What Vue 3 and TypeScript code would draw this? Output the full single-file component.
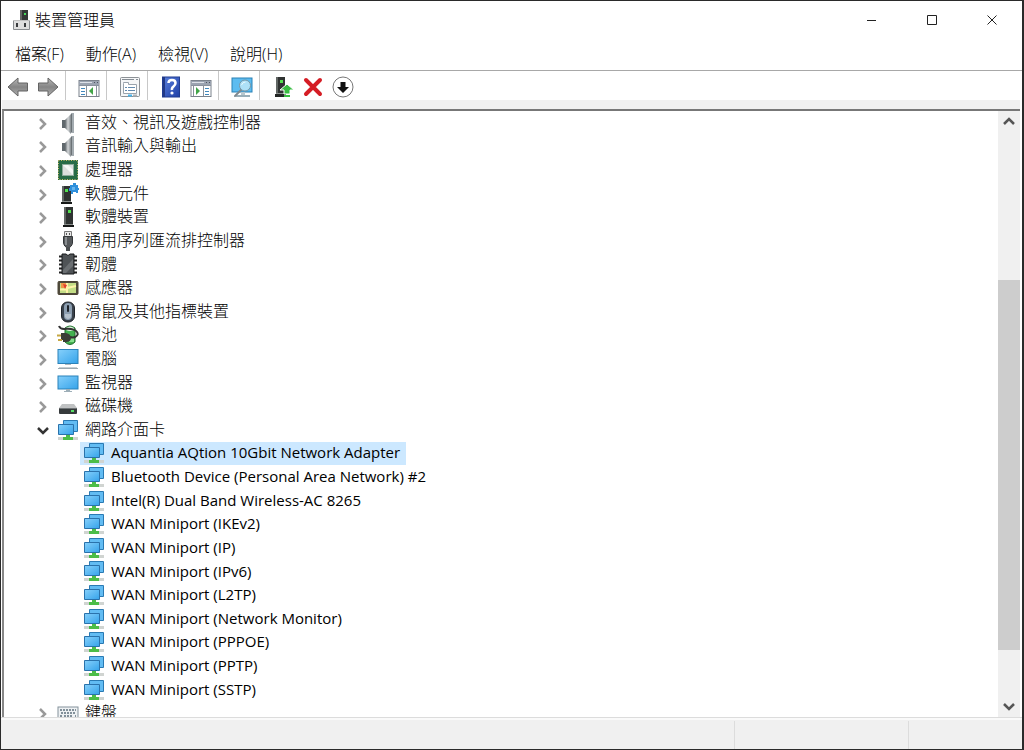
<script setup lang="ts">
import { ref } from 'vue'

interface Item {
  label: string
  icon: string
  state?: 'open' | 'closed'
}

const menus = ['檔案(F)', '動作(A)', '檢視(V)', '說明(H)']

const tools: { icon: string; title: string }[][] = [
  [
    { icon: 'back', title: '上一頁' },
    { icon: 'forward', title: '下一頁' },
  ],
  [{ icon: 'console-tree', title: '顯示/隱藏主控台樹狀目錄' }],
  [{ icon: 'properties', title: '內容' }],
  [
    { icon: 'help', title: '說明' },
    { icon: 'action-pane', title: '顯示/隱藏執行窗格' },
  ],
  [{ icon: 'scan', title: '掃描硬體變更' }],
  [
    { icon: 'update', title: '更新驅動程式' },
    { icon: 'remove', title: '解除安裝裝置' },
    { icon: 'disable', title: '停用裝置' },
  ],
]

const adapters = [
  'Aquantia AQtion 10Gbit Network Adapter',
  'Bluetooth Device (Personal Area Network) #2',
  'Intel(R) Dual Band Wireless-AC 8265',
  'WAN Miniport (IKEv2)',
  'WAN Miniport (IP)',
  'WAN Miniport (IPv6)',
  'WAN Miniport (L2TP)',
  'WAN Miniport (Network Monitor)',
  'WAN Miniport (PPPOE)',
  'WAN Miniport (PPTP)',
  'WAN Miniport (SSTP)',
]

const items: Item[] = [
  { label: '音效、視訊及遊戲控制器', icon: 'speaker', state: 'closed' },
  { label: '音訊輸入與輸出', icon: 'speaker', state: 'closed' },
  { label: '處理器', icon: 'cpu', state: 'closed' },
  { label: '軟體元件', icon: 'component', state: 'closed' },
  { label: '軟體裝置', icon: 'tower', state: 'closed' },
  { label: '通用序列匯流排控制器', icon: 'usb', state: 'closed' },
  { label: '韌體', icon: 'chip', state: 'closed' },
  { label: '感應器', icon: 'sensor', state: 'closed' },
  { label: '滑鼠及其他指標裝置', icon: 'mouse', state: 'closed' },
  { label: '電池', icon: 'battery', state: 'closed' },
  { label: '電腦', icon: 'computer', state: 'closed' },
  { label: '監視器', icon: 'monitor', state: 'closed' },
  { label: '磁碟機', icon: 'disk', state: 'closed' },
  { label: '網路介面卡', icon: 'network', state: 'open' },
  ...adapters.map((label) => ({ label, icon: 'network' })),
  { label: '鍵盤', icon: 'keyboard', state: 'closed' },
]

const selected = ref(adapters[0])
</script>

<template>
  <svg class="defs" aria-hidden="true">
    <defs>
      <linearGradient id="g-screen" x1="0" y1="0" x2="1" y2="1">
        <stop offset="0" stop-color="#86d0fb" /><stop offset="1" stop-color="#35a3ea" />
      </linearGradient>
      <linearGradient id="g-metal" x1="0" y1="0" x2="1" y2="0">
        <stop offset="0" stop-color="#5d6468" /><stop offset="0.5" stop-color="#d3d6d8" /><stop offset="1" stop-color="#80878b" />
      </linearGradient>
      <linearGradient id="g-arrow" x1="0" y1="0" x2="0" y2="1">
        <stop offset="0" stop-color="#b9b9b9" /><stop offset="0.5" stop-color="#858585" /><stop offset="1" stop-color="#b0b0b0" />
      </linearGradient>
      <linearGradient id="g-help" x1="0" y1="0" x2="1" y2="1">
        <stop offset="0" stop-color="#5a80dc" /><stop offset="1" stop-color="#1f3fa6" />
      </linearGradient>
      <symbol id="i-speaker" viewBox="0 0 22 22">
        <path d="M5 8h4v8H5z" fill="#60686d" />
        <path d="M8 8 14 2v20l-6-6z" fill="url(#g-metal)" />
        <path d="M14 1h3v20h-3z" fill="#a3abb0" />
        <path d="M14.500 2v18" stroke="#6b7276" />
      </symbol>
      <symbol id="i-cpu" viewBox="0 0 22 22">
        <rect x="1.500" y="1.500" width="19" height="19" fill="#286b46" stroke="#286b46" />
        <rect x="1.500" y="1.500" width="19" height="19" fill="none" stroke="#cdbb6a" stroke-dasharray="1 1.500" />
        <rect x="5.500" y="5.500" width="11" height="11" fill="#dcdfdc" stroke="#8fab9c" />
        <path d="M6 6h5l5 5v5z" fill="#f6f7f6" />
      </symbol>
      <symbol id="i-tower" viewBox="0 0 22 22">
        <path d="M7 1h9v17H7z" fill="#303332" />
        <path d="M7 1h2v17H7z" fill="#626765" />
        <path d="M6 19h11v2H6z" fill="#171918" />
        <path d="M7 18.500h9" stroke="#8a8f8d" />
        <rect x="11" y="4" width="3" height="3" fill="#53df4f" />
      </symbol>
      <symbol id="i-component" viewBox="0 0 22 22">
        <path d="M5 3h9v16H5z" fill="#303332" />
        <path d="M5 3h2v16H5z" fill="#626765" />
        <path d="M4 19h11v2H4z" fill="#171918" />
        <path d="M5 18.500h9" stroke="#8a8f8d" />
        <rect x="8" y="6" width="3" height="3" fill="#53df4f" />
        <path d="M13 2h3V0h3v2h2v3h1v2h-1v3h-2V9h-3v2h-2V8h-2V5h1z" fill="#2e8fdb" />
        <path d="M15 4h3v3h-3z" fill="#64b4ee" />
      </symbol>
      <symbol id="i-usb" viewBox="0 0 22 22">
        <path d="M7.500 1.500h7v5h-7z" fill="#e8e8e8" stroke="#777" />
        <path d="M9 3h1v2H9zM12 3h1v2h-1z" fill="#555" />
        <path d="M6.500 6.500h9v7q-1 3-3 4h-3q-2-1-3-4z" fill="#55585b" stroke="#34373a" />
        <path d="M9 7v8" stroke="#898d90" stroke-width="2" />
        <path d="M9 17h4v4H9z" fill="#4b4e50" />
      </symbol>
      <symbol id="i-chip" viewBox="0 0 22 22">
        <path d="M2 3.500h18M2 7.500h18M2 11.500h18M2 15.500h18M2 19.500h18" stroke="#222" stroke-width="2" />
        <path d="M5 1h4q2 3 4 0h4v20H5z" fill="#4f5356" stroke="#191b1c" />
        <path d="M6 17 16 6v7l-7 7H6z" fill="#6b6f72" />
      </symbol>
      <symbol id="i-sensor" viewBox="0 0 22 22">
        <rect x="1" y="4.500" width="20" height="13" rx="1" fill="#4f4a3c" stroke="#4d4535" />
        <path d="M3 6h16v10H3z" fill="#c3dd86" />
        <path d="M4 6h6v5H4z" fill="#ee9648" />
        <path d="M3 12.500h7M10 6v10M10 11l9-2" stroke="#fff3a8" stroke-width="2" />
        <path d="m6 7 4 1-2 4z" fill="#e23d31" />
      </symbol>
      <symbol id="i-mouse" viewBox="0 0 22 22">
        <rect x="4.500" y="1" width="13" height="20" rx="6" fill="#39424c" stroke="#202429" />
        <rect x="7" y="2" width="8" height="17" rx="4" fill="#8b9daf" />
        <path d="M8 13h6v3q-3 4-6 0z" fill="#b5c1cc" />
        <rect x="10" y="4" width="2" height="7" rx="1" fill="#1d2228" />
      </symbol>
      <symbol id="i-battery" viewBox="0 0 22 22">
        <path d="M8 4q5-4 10 0v14q-5 5-10 0z" fill="#43b150" stroke="#226b2d" />
        <path d="M9 4q4-3 8 0v2q-4 2-8 0z" fill="#dff3de" />
        <path d="M12 14h5v4h-5z" fill="#84e08b" />
        <path d="M2 2q1 3 5 3 10-1 13 3 2 3-2 5-2 1-5 0" fill="none" stroke="#333" stroke-width="2" />
        <path d="M4 9h5q5 1 5 5t-5 4H6v-2H4z" fill="#3b3d36" />
        <path d="M0 11.500h4M1 16h4" stroke="#c6a743" stroke-width="2" />
      </symbol>
      <symbol id="i-computer" viewBox="0 0 22 22">
        <rect x="1" y="1.500" width="20" height="14" fill="url(#g-screen)" stroke="#2b82b9" />
        <path d="M8 16h6v1H8z" fill="#aeb8bf" />
        <path d="M1 20.500h20" stroke="#9aa8b0" />
        <path d="M2 19.500h18" stroke="#c5ced3" />
      </symbol>
      <symbol id="i-monitor" viewBox="0 0 22 22">
        <rect x="1" y="4" width="20" height="13" fill="url(#g-screen)" stroke="#2b82b9" />
        <path d="M9 17h4v2H9z" fill="#9eafb8" />
        <path d="M7 19.500h8" stroke="#9eafb8" />
      </symbol>
      <symbol id="i-disk" viewBox="0 0 22 22">
        <path d="m5 9h12l3 4H2z" fill="#c0c2c3" />
        <rect x="2" y="13" width="18" height="6" rx="1" fill="#363a3c" />
        <path d="M3 13.500h16" stroke="#707577" />
        <path d="M14 16h3" stroke="#56df64" stroke-width="2" />
      </symbol>
      <symbol id="i-network" viewBox="0 0 22 22">
        <path d="M1 19.500h20" stroke="#d0d4d1" stroke-width="3" />
        <path d="M6.500 1.500h14v11h-14z" fill="#62bcf3" stroke="#2a7ab3" />
        <path d="M9 15h4v3h3v3H6v-3h3z" fill="#4cbd48" />
        <path d="M1.500 5.500h15v10h-15z" fill="url(#g-screen)" stroke="#2a72ab" />
      </symbol>
      <symbol id="i-keyboard" viewBox="0 0 22 22">
        <rect x="1" y="5" width="20" height="12" fill="#eef1f3" stroke="#84929b" />
        <path d="M3 8h16M4 11h15M3 14h2M7 14h9M18 14h1" stroke="#82909a" stroke-width="2" stroke-dasharray="2 1" />
      </symbol>
      <symbol id="i-manager" viewBox="0 0 22 22">
        <path d="M10 1h7v11h-7z" fill="#343837" />
        <path d="M9 1h2v11H9z" fill="#666" />
        <rect x="13" y="4" width="2" height="2" fill="#49dd5c" />
        <path d="M2.500 11.500h16v9h-16z" fill="#dedede" stroke="#8a8d90" />
        <path d="M2 11.500h17" stroke="#c0c0c0" />
        <path d="M6 14v4M14 14v4" stroke="#383a3c" stroke-width="2" />
      </symbol>
      <symbol id="i-back" viewBox="0 0 22 22">
        <path d="m1 11 10-9v5h9.500v8H11v5z" fill="url(#g-arrow)" stroke="#636363" stroke-linejoin="round" />
      </symbol>
      <symbol id="i-forward" viewBox="0 0 22 22">
        <path d="M21 11 11 2v5H1.500v8H11v5z" fill="url(#g-arrow)" stroke="#636363" stroke-linejoin="round" />
      </symbol>
      <symbol id="i-console-tree" viewBox="0 0 22 22">
        <rect x="1" y="4.500" width="20" height="16" fill="#fff" stroke="#7b828c" />
        <path d="M1 5h20v4H1z" fill="#9ba3b0" />
        <path d="M2 6.500h12" stroke="#dce0e7" />
        <path d="M16 6.500h1M19 6.500h1" stroke="#4e5561" />
        <path d="M1 9.500h20M8.500 10v10M18.500 10v10" stroke="#8a929d" />
        <path d="M3 12.500h4M3 15.500h4M3 18.500h4" stroke="#4188bd" />
        <path d="m11 15 4-4v8z" fill="#42a548" />
      </symbol>
      <symbol id="i-action-pane" viewBox="0 0 22 22">
        <rect x="1" y="4.500" width="20" height="16" fill="#fff" stroke="#7b828c" />
        <path d="M1 5h20v4H1z" fill="#9ba3b0" />
        <path d="M2 6.500h12" stroke="#dce0e7" />
        <path d="M16 6.500h1M19 6.500h1" stroke="#4e5561" />
        <path d="M1 9.500h20M3.500 10v10M13.500 10v10" stroke="#8a929d" />
        <path d="M15 12.500h4M15 15.500h4M15 18.500h4" stroke="#4188bd" />
        <path d="m10 15-4-4v8z" fill="#42a548" />
      </symbol>
      <symbol id="i-properties" viewBox="0 0 22 22">
        <rect x="1.500" y="1.500" width="19" height="19" rx="1" fill="#f5f6f7" stroke="#8c9196" />
        <path d="M3 3.500h12M17 3.500h2" stroke="#868d95" />
        <path d="M4.500 7.500V6.500h5v2h8v9h-13z" fill="#fff" stroke="#9aa3ac" />
        <path d="M6 11.500h2M9 11.500h7M6 14.500h2M9 14.500h7" stroke="#628aaf" />
        <path d="M9 19.500h4" stroke="#47b5ed" stroke-width="2" />
        <path d="M14 19.500h4" stroke="#aeb3b7" stroke-width="2" />
      </symbol>
      <symbol id="i-help" viewBox="0 0 22 22">
        <rect x="2.500" y="1" width="17" height="20" fill="url(#g-help)" stroke="#203c91" />
        <path d="M4 1v20" stroke="#223986" stroke-width="2" />
        <path d="M8.500 7q0-3 3.500-3t3.500 3q0 2-2 3.500T12 14" fill="none" stroke="#fff" stroke-width="2.500" />
        <circle cx="12" cy="17" r="1.600" fill="#fff" />
      </symbol>
      <symbol id="i-scan" viewBox="0 0 22 22">
        <rect x="1" y="2" width="20" height="14" fill="#5dbcf0" stroke="#2b81b6" />
        <path d="M10 16h4v3h-4z" fill="#b9c8cf" />
        <path d="M5 20h14" stroke="#9aafb9" stroke-width="2" />
        <path d="m11 13-7 7" stroke="#7f898f" stroke-width="2" stroke-linecap="round" />
        <circle cx="14" cy="9.500" r="5.500" fill="#aee0f7" stroke="#7897a6" />
        <path d="M10.500 9q1-3 4-3" fill="none" stroke="#e9f9ff" />
      </symbol>
      <symbol id="i-update" viewBox="0 0 22 22">
        <path d="M4 1h9v16H4z" fill="#303332" />
        <path d="M4 1h2v16H4z" fill="#626765" />
        <path d="M3 18h11v3H3z" fill="#232625" />
        <path d="M4 17.500h9" stroke="#8a8f8d" />
        <rect x="8" y="4" width="3" height="3" fill="#53df4f" />
        <path d="m15 8 7 6h-4v4h-6v-4H8z" fill="#39bd42" stroke="#fff" />
        <path d="M12 20h6" stroke="#39bd42" stroke-width="2" />
      </symbol>
      <symbol id="i-remove" viewBox="0 0 22 22">
        <path d="m4 4 14 14M18 4 4 18" stroke="#d51d25" stroke-width="4" stroke-linecap="round" />
      </symbol>
      <symbol id="i-disable" viewBox="0 0 22 22">
        <circle cx="11" cy="11" r="10" fill="#fff" stroke="#777" />
        <path d="M8.500 6h5v5H17l-6 6-6-6h3.500z" fill="#111" />
      </symbol>
    </defs>
  </svg>

  <div class="window" lang="zh-Hant">
    <header class="titlebar">
      <svg class="icon"><use href="#i-manager" /></svg>
      <h1>裝置管理員</h1>
      <div class="caption">
        <button type="button" aria-label="最小化">
          <svg viewBox="0 0 12 12"><path d="M1 6.500h9" /></svg>
        </button>
        <button type="button" aria-label="最大化">
          <svg viewBox="0 0 12 12"><path d="M1.500 1.500h9v9h-9z" /></svg>
        </button>
        <button type="button" aria-label="關閉">
          <svg viewBox="0 0 12 12"><path d="m1.500 1.500 9 9M10.500 1.500l-9 9" /></svg>
        </button>
      </div>
    </header>

    <nav class="menubar">
      <button v-for="m in menus" :key="m" type="button">{{ m }}</button>
    </nav>

    <div class="toolbar" role="toolbar">
      <div v-for="(group, i) in tools" :key="i" class="group">
        <button v-for="t in group" :key="t.icon" type="button" :aria-label="t.title">
          <svg class="icon"><use :href="`#i-${t.icon}`" /></svg>
        </button>
      </div>
    </div>

    <main class="panel">
      <div class="viewport">
        <ul class="tree" role="tree">
          <li
            v-for="item in items"
            :key="item.label"
            role="treeitem"
            :aria-selected="item.label === selected"
            :class="{ child: !item.state }"
          >
            <button v-if="item.state" type="button" class="toggle" :class="item.state" :aria-label="item.label">
              <svg viewBox="0 0 14 14">
                <path :d="item.state === 'open' ? 'm2 5 5 5 5-5' : 'm4 3 5 5-5 5'" />
              </svg>
            </button>
            <div class="label" :class="{ selected: item.label === selected }" @click="selected = item.label">
              <svg class="icon"><use :href="`#i-${item.icon}`" /></svg>
              <span>{{ item.label }}</span>
            </div>
          </li>
        </ul>
      </div>
      <div class="scrollbar">
        <button type="button" aria-label="向上捲動">
          <svg viewBox="0 0 14 14"><path d="m2 9 5-5 5 5" /></svg>
        </button>
        <div class="track"><div class="thumb"></div></div>
        <button type="button" aria-label="向下捲動">
          <svg viewBox="0 0 14 14"><path d="m2 5 5 5 5-5" /></svg>
        </button>
      </div>
    </main>

    <footer class="statusbar"><div></div><div></div><div></div></footer>
  </div>
</template>

<style>
body {
  margin: 0;
  background: #222;
}
</style>

<style scoped>
.defs {
  position: absolute;
  width: 0;
  height: 0;
}
.window {
  box-sizing: border-box;
  height: 100vh;
  display: flex;
  flex-direction: column;
  overflow: hidden;
  background: #fff;
  border: 1px solid #2a2a2a;
  border-right-width: 2px;
  color: #000;
  font-family: 'Open Sans', 'Noto Sans CJK TC', sans-serif;
  font-size: 15px;
  line-height: 22px;
}
button {
  border: 0;
  padding: 0;
  background: transparent;
  color: inherit;
  font: inherit;
  display: flex;
  align-items: center;
  justify-content: center;
}
.icon {
  width: 22px;
  height: 22px;
  flex: none;
}
.titlebar {
  height: 38px;
  flex: none;
  display: flex;
  align-items: center;
  padding-left: 10px;
  gap: 2px;
}
h1 {
  margin: 0;
  font-size: 16px;
  font-weight: 300;
}
.caption {
  margin-left: auto;
  display: flex;
  align-self: stretch;
}
.caption button {
  width: 60px;
}
.caption svg {
  width: 12px;
  height: 12px;
  fill: none;
  stroke: #222;
}
.menubar {
  height: 31px;
  flex: none;
  display: flex;
  padding-left: 3px;
}
.menubar button {
  padding: 0 11px 2px;
  font-size: 16px;
  font-weight: 300;
}
.toolbar {
  height: 29px;
  flex: none;
  display: flex;
  padding-left: 2px;
  border-top: 1px solid #a8a8a8;
}
.group {
  display: flex;
}
.group + .group {
  margin-left: 2px;
  padding-left: 8px;
  border-left: 1px solid #c8c8c8;
}
.group button {
  width: 30px;
  padding-top: 3px;
}
.panel {
  flex: 1;
  min-height: 0;
  display: flex;
  background: #fff;
  border-top: 2px solid #777;
  border-left: 2px solid #888;
  margin-left: 1px;
  margin-right: 2px;
}
.toolbar + .panel {
  box-shadow: 0 -9px 0 #f0f0f0;
  margin-top: 9px;
}
.viewport {
  flex: 1;
  overflow: hidden;
}
.tree {
  list-style: none;
  margin: 0;
  padding: 0;
  height: 614px;
  display: grid;
  grid-auto-rows: 1fr;
  font-size: 16px;
  font-weight: 300;
}
.tree li {
  display: flex;
  align-items: stretch;
  padding-left: 28px;
  min-height: 0;
}
.tree li.child {
  padding-left: 76px;
  font-size: 15px;
  font-weight: 400;
}
.toggle {
  width: 22px;
}
.toggle svg {
  width: 14px;
  height: 14px;
  fill: none;
  stroke: #999;
  stroke-width: 2.5;
}
.toggle.open svg {
  stroke: #333;
}
.label {
  display: flex;
  align-items: center;
  gap: 6px;
  padding: 0 6px 0 3px;
  white-space: nowrap;
}
.label span {
  padding-bottom: 2px;
}
.label.selected {
  background: #cce8ff;
}
.scrollbar {
  width: 22px;
  flex: none;
  display: flex;
  flex-direction: column;
  background: #f0f0f0;
}
.scrollbar button {
  height: 22px;
}
.scrollbar svg {
  width: 14px;
  height: 14px;
  fill: none;
  stroke: #555;
  stroke-width: 2.5;
}
.track {
  flex: 1;
  display: grid;
  grid-template-rows: 147fr 370fr 45fr;
}
.thumb {
  grid-row: 2;
  background: #cdcdcd;
}
.statusbar {
  height: 28px;
  flex: none;
  display: grid;
  grid-template-columns: 1fr 174px 114px;
  background: #f0f0f0;
  border-top: 1px solid #dcdcdc;
  box-shadow: inset 0 2px 0 #fafafa;
  padding-top: 3px;
}
.statusbar div + div {
  border-left: 1px solid #dcdcdc;
}
</style>
